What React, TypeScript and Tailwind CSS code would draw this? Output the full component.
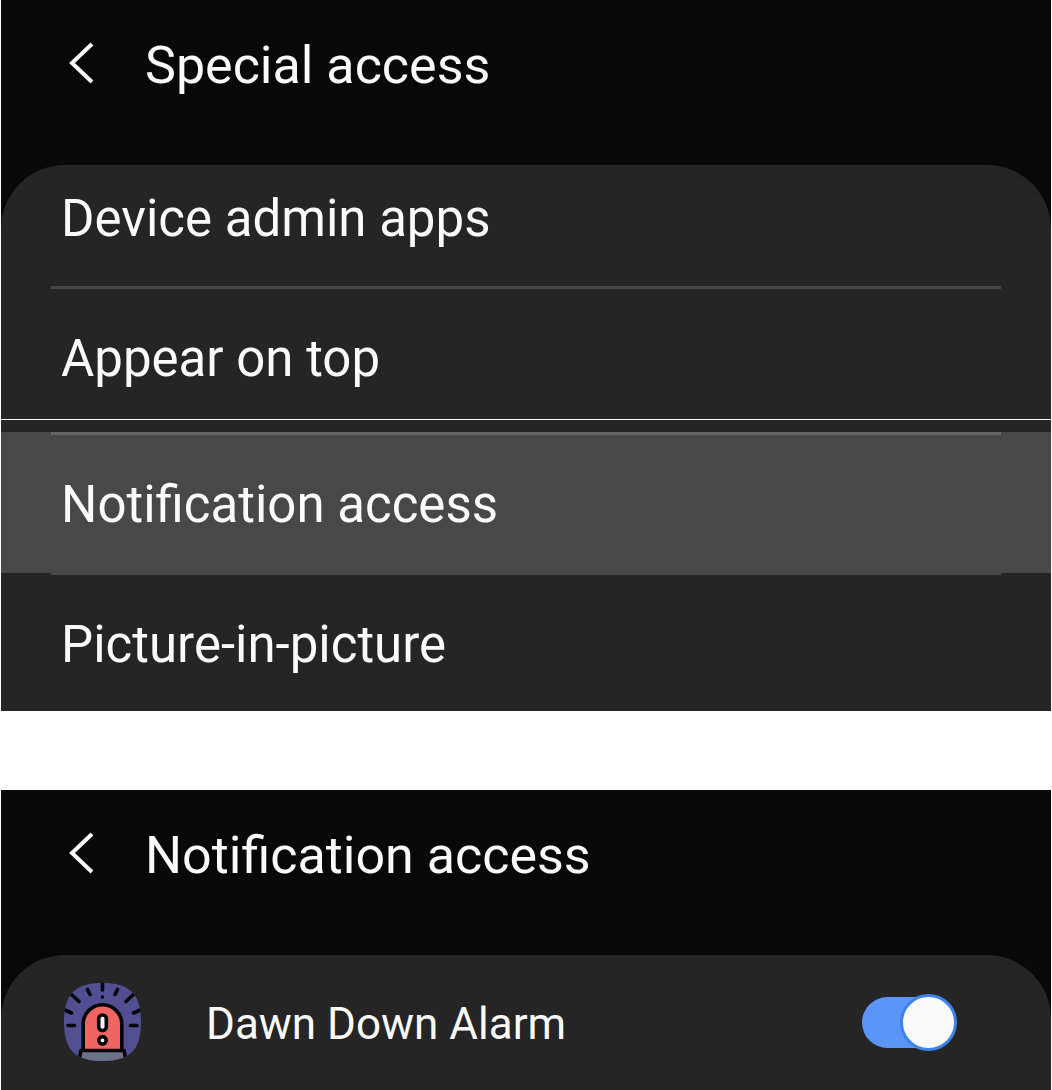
import React from "react";

function Header({ title }: { title: string }) {
  return (
    <header className="flex items-start gap-12 bg-[#080808] px-16 pt-[33px] pb-[67px] text-[#fafafa]">
      <button type="button" aria-label="Back" className="mt-2 flex w-8 shrink-0 justify-center">
        <svg viewBox="0 0 32 44" className="h-11 w-8" fill="none" stroke="currentColor" strokeWidth="4" aria-hidden="true">
          <path d="M27 3 L7 22 L27 41" />
        </svg>
      </button>
      <h1 className="text-[52px] leading-[65px] whitespace-nowrap">{title}</h1>
    </header>
  );
}

function Row({ label, className }: { label: string; className: string }) {
  return (
    <button type="button" className={`block w-full px-15 text-left text-[51px] leading-[65px] whitespace-nowrap ${className}`}>
      {label}
    </button>
  );
}

function AlarmIcon() {
  return (
    <svg viewBox="0 0 78 78" className="h-[78px] w-[78px] shrink-0" aria-hidden="true">
      <defs>
        <clipPath id="badge">
          <path d="M38.5 0 C66 0 77 11 77 39 C77 67 66 78 38.5 78 C11 78 0 67 0 39 C0 11 11 0 38.5 0Z" />
        </clipPath>
      </defs>
      <g clipPath="url(#badge)">
        <rect width="78" height="78" fill="#524e92" />
        <path
          d="M38.5 0V7M38.5 14V14.1M23.5 6.5L26 11.5M53.5 6.5L51 11.5M7 11L15 18.5M70 11L62 18.5M1 27L7.5 30M76 27L69.5 30M4 42.5H10.500M66.500 42.5H73"
          stroke="#050507"
          strokeWidth="3.6"
          strokeLinecap="round"
          fill="none"
        />
        <path d="M19.200 68V41a19.300 19.300 0 0 1 38.600 0v27Z" fill="#ef6562" stroke="#050507" strokeWidth="3.6" />
        <path d="M14 82L17 67.500H60L63 82Z" fill="#6d7188" stroke="#050507" strokeWidth="3.6" strokeLinejoin="round" />
        <rect x="34.700" y="32" width="7.600" height="15.500" rx="3.800" fill="#fff" stroke="#050507" strokeWidth="3.6" />
        <circle cx="38.500" cy="57.300" r="3.700" fill="#fff" stroke="#050507" strokeWidth="3.6" />
      </g>
    </svg>
  );
}

function Toggle({ label }: { label: string }) {
  return (
    <label className="relative flex h-[57px] w-[95px] shrink-0 cursor-pointer items-center">
      <input type="checkbox" role="switch" defaultChecked aria-label={label} className="peer absolute inset-0 z-10 cursor-pointer opacity-0" />
      <span className="h-[51px] w-20 rounded-full bg-[#7a7a7a] peer-checked:bg-[#5a95f7]" />
      <span className="absolute left-0 size-[57px] rounded-full border-3 border-[#3d84e8] bg-[#fafafa] peer-checked:right-0 peer-checked:left-auto" />
    </label>
  );
}

export default function App() {
  return (
    <main className="bg-white px-px font-[Roboto,sans-serif] text-[#fafafa]">
      <section className="bg-[#080808]">
        <Header title="Special access" />
        <div className="rounded-t-[64px] bg-[#252525]">
          <Row label="Device admin apps" className="pt-[21px] pb-[35px]" />
          <hr className="mx-[50px] border-t-3 border-[#484848]" />
          <Row label="Appear on top" className="pt-[37px] pb-7" />
        </div>
      </section>
      <section className="mt-px bg-[#252525] pt-3">
        <div className="bg-[#484848]">
          <hr className="mx-[50px] border-t-3 border-[#656565]" />
          <Row label="Notification access" className="pt-[37px] pb-9" />
        </div>
        <hr className="mx-[50px] border-t-2 border-[#484848]" />
        <Row label="Picture-in-picture" className="pt-[37px] pb-[34px]" />
      </section>
      <section className="mt-[79px] bg-[#080808]">
        <Header title="Notification access" />
        <div className="flex items-center rounded-t-[64px] bg-[#252525] pt-7 pr-[94px] pb-[29px] pl-[63px]">
          <AlarmIcon />
          <span className="ml-16 flex-1 pt-1 text-[44px] leading-[74px] whitespace-nowrap">Dawn Down Alarm</span>
          <Toggle label="Dawn Down Alarm" />
        </div>
      </section>
    </main>
  );
}
